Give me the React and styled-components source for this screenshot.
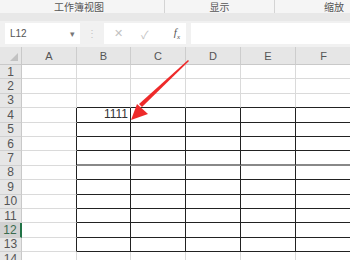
import React from 'react'
import styled, { createGlobalStyle } from 'styled-components';

const Global = createGlobalStyle`
  body {
    margin: 0;
    background: #f1f1f1;
    font-family: "Liberation Sans", "Noto Sans CJK SC", sans-serif;
    overflow: hidden;
  }
`

const COLS = [
  { name: 'A', w: 55 },
  { name: 'B', w: 54 },
  { name: 'C', w: 55 },
  { name: 'D', w: 55 },
  { name: 'E', w: 55 },
  { name: 'F', w: 56 },
];
const ROWS = Array.from({ length: 14 }, (_, i) => i + 1);

const App = () => {
  return (
    <Page>
      <Global />
      <RibbonLabels>
        <Group $w={165} $pad={60}>工作簿视图</Group>
        <Group $w={110}>显示</Group>
        <Group $w={75} $pad={6}>缩放</Group>
      </RibbonLabels>
      <Band />
      <Toolbar>
        <NameBox>
          <span>L12</span>
          <Caret>▾</Caret>
        </NameBox>
        <Dots>⋮</Dots>
        <FxButtons>
          <FxBtn>✕</FxBtn>
          <FxBtn>✓</FxBtn>
          <FxLabel>f<sub>x</sub></FxLabel>
        </FxButtons>
        <FormulaInput />
      </Toolbar>
      <Sheet>
        <Corner><Tri /></Corner>
        {COLS.map(c => <ColHead key={c.name}>{c.name}</ColHead>)}
        {ROWS.map(r => (
          <React.Fragment key={r}>
            <RowHead $active={r === 12}>{r}</RowHead>
            {COLS.map((c, ci) => {
              const inBox = r >= 4 && r <= 13 && ci >= 1;
              const aboveBox = r === 3 && ci >= 1;
              const leftOfBox = r >= 4 && r <= 13 && ci === 0;
              const thick = r === 7 && ci >= 1;
              return (
                <Cell
                  key={c.name}
                  $right={inBox || leftOfBox ? '#222' : '#dadada'}
                  $bottom={thick ? '#888' : inBox || aboveBox ? '#222' : '#dadada'}
                  $bw={thick ? 2 : 1}
                >
                  {r === 4 && c.name === 'B' ? '1111' : ''}
                </Cell>
              );
            })}
          </React.Fragment>
        ))}
        <Arrow width='80' height='70' viewBox='0 0 80 70'>
          <path d='M69 2 L20 46 L23 49 L70 3 Z' fill='#ee2a2a' />
          <polygon points='12,62 18,46 29,56' fill='#ee2a2a' />
        </Arrow>
      </Sheet>
    </Page>
  );
}

export default App;

const Page = styled.div`
  width: 350px;
  height: 260px;
  overflow: hidden;
`

const RibbonLabels = styled.div`
  display: flex;
  height: 13px;
  background: #f5f5f5;
`

const Group = styled.div`
  width: ${p => p.$w}px;
  box-sizing: border-box;
  display: flex;
  justify-content: ${p => (p.$pad ? 'flex-end' : 'center')};
  padding-right: ${p => p.$pad || 0}px;
  align-items: center;
  font-family: "Noto Sans CJK SC", sans-serif;
  font-size: 10px;
  line-height: 10px;
  color: #555;
  border-right: 1px solid #d4d4d4;
  &:last-child { border-right: none; }
`

const Band = styled.div`
  height: 8px;
  background: #e8e8e8;
`

const Toolbar = styled.div`
  display: flex;
  align-items: center;
  height: 25px;
  padding-left: 5px;
  background: #f1f1f1;
`

const NameBox = styled.div`
  width: 75px;
  height: 21px;
  background: #fff;
  display: flex;
  align-items: center;
  justify-content: space-between;
  padding: 0 5px;
  box-sizing: border-box;
  font-size: 10px;
  color: #555;
`

const Caret = styled.span`
  font-size: 9px;
  color: #777;
`

const Dots = styled.div`
  width: 24px;
  text-align: center;
  font-size: 10px;
  color: #c4c4c4;
`

const FxButtons = styled.div`
  width: 82px;
  height: 21px;
  background: #fff;
  display: flex;
  align-items: center;
  padding: 0 6px 0 10px;
  box-sizing: border-box;
`

const FxBtn = styled.span`
  width: 27px;
  font-size: 11px;
  color: #c2c2c2;
`

const FxLabel = styled.span`
  margin-left: auto;
  font-family: "Liberation Serif", serif;
  font-style: italic;
  font-size: 11px;
  color: #555;
  sub { font-size: 7px; }
`

const FormulaInput = styled.div`
  margin-left: 5px;
  flex: 1;
  height: 21px;
  background: #fff;
`

const Sheet = styled.div`
  position: relative;
  margin-top: 1px;
  display: grid;
  grid-template-columns: 22px ${COLS.map(c => c.w + 'px').join(' ')};
  grid-template-rows: 18px repeat(14, 14.4px);
  background: #fff;
  font-family: "Liberation Sans", sans-serif;
`

const Corner = styled.div`
  background: #e6e6e6;
  border-right: 1px solid #c9c9c9;
  border-bottom: 1px solid #c9c9c9;
  position: relative;
`

const Tri = styled.div`
  position: absolute;
  right: 3px;
  bottom: 3px;
  width: 0;
  height: 0;
  border-left: 8px solid transparent;
  border-bottom: 8px solid #c2c2c2;
`

const ColHead = styled.div`
  background: #e6e6e6;
  border-right: 1px solid #cdcdcd;
  border-bottom: 1px solid #c9c9c9;
  display: flex;
  align-items: center;
  justify-content: center;
  font-size: 11px;
  color: #555;
`

const RowHead = styled.div`
  background: ${p => (p.$active ? '#d2d2d2' : '#e6e6e6')};
  border-right: ${p => (p.$active ? '2px solid #217346' : '1px solid #c9c9c9')};
  border-bottom: 1px solid #d0d0d0;
  display: flex;
  align-items: center;
  justify-content: center;
  font-size: 12px;
  color: ${p => (p.$active ? '#3a6b4f' : '#555')};
  box-sizing: border-box;
  overflow: hidden;
`

const Cell = styled.div`
  border-right: 1px solid ${p => p.$right};
  border-bottom: ${p => p.$bw}px solid ${p => p.$bottom};
  box-sizing: border-box;
  font-size: 12px;
  color: #333;
  text-align: right;
  padding-right: 2px;
  line-height: 13px;
  overflow: hidden;
`

const Arrow = styled.svg`
  position: absolute;
  left: 119px;
  top: 11px;
  pointer-events: none;
`
